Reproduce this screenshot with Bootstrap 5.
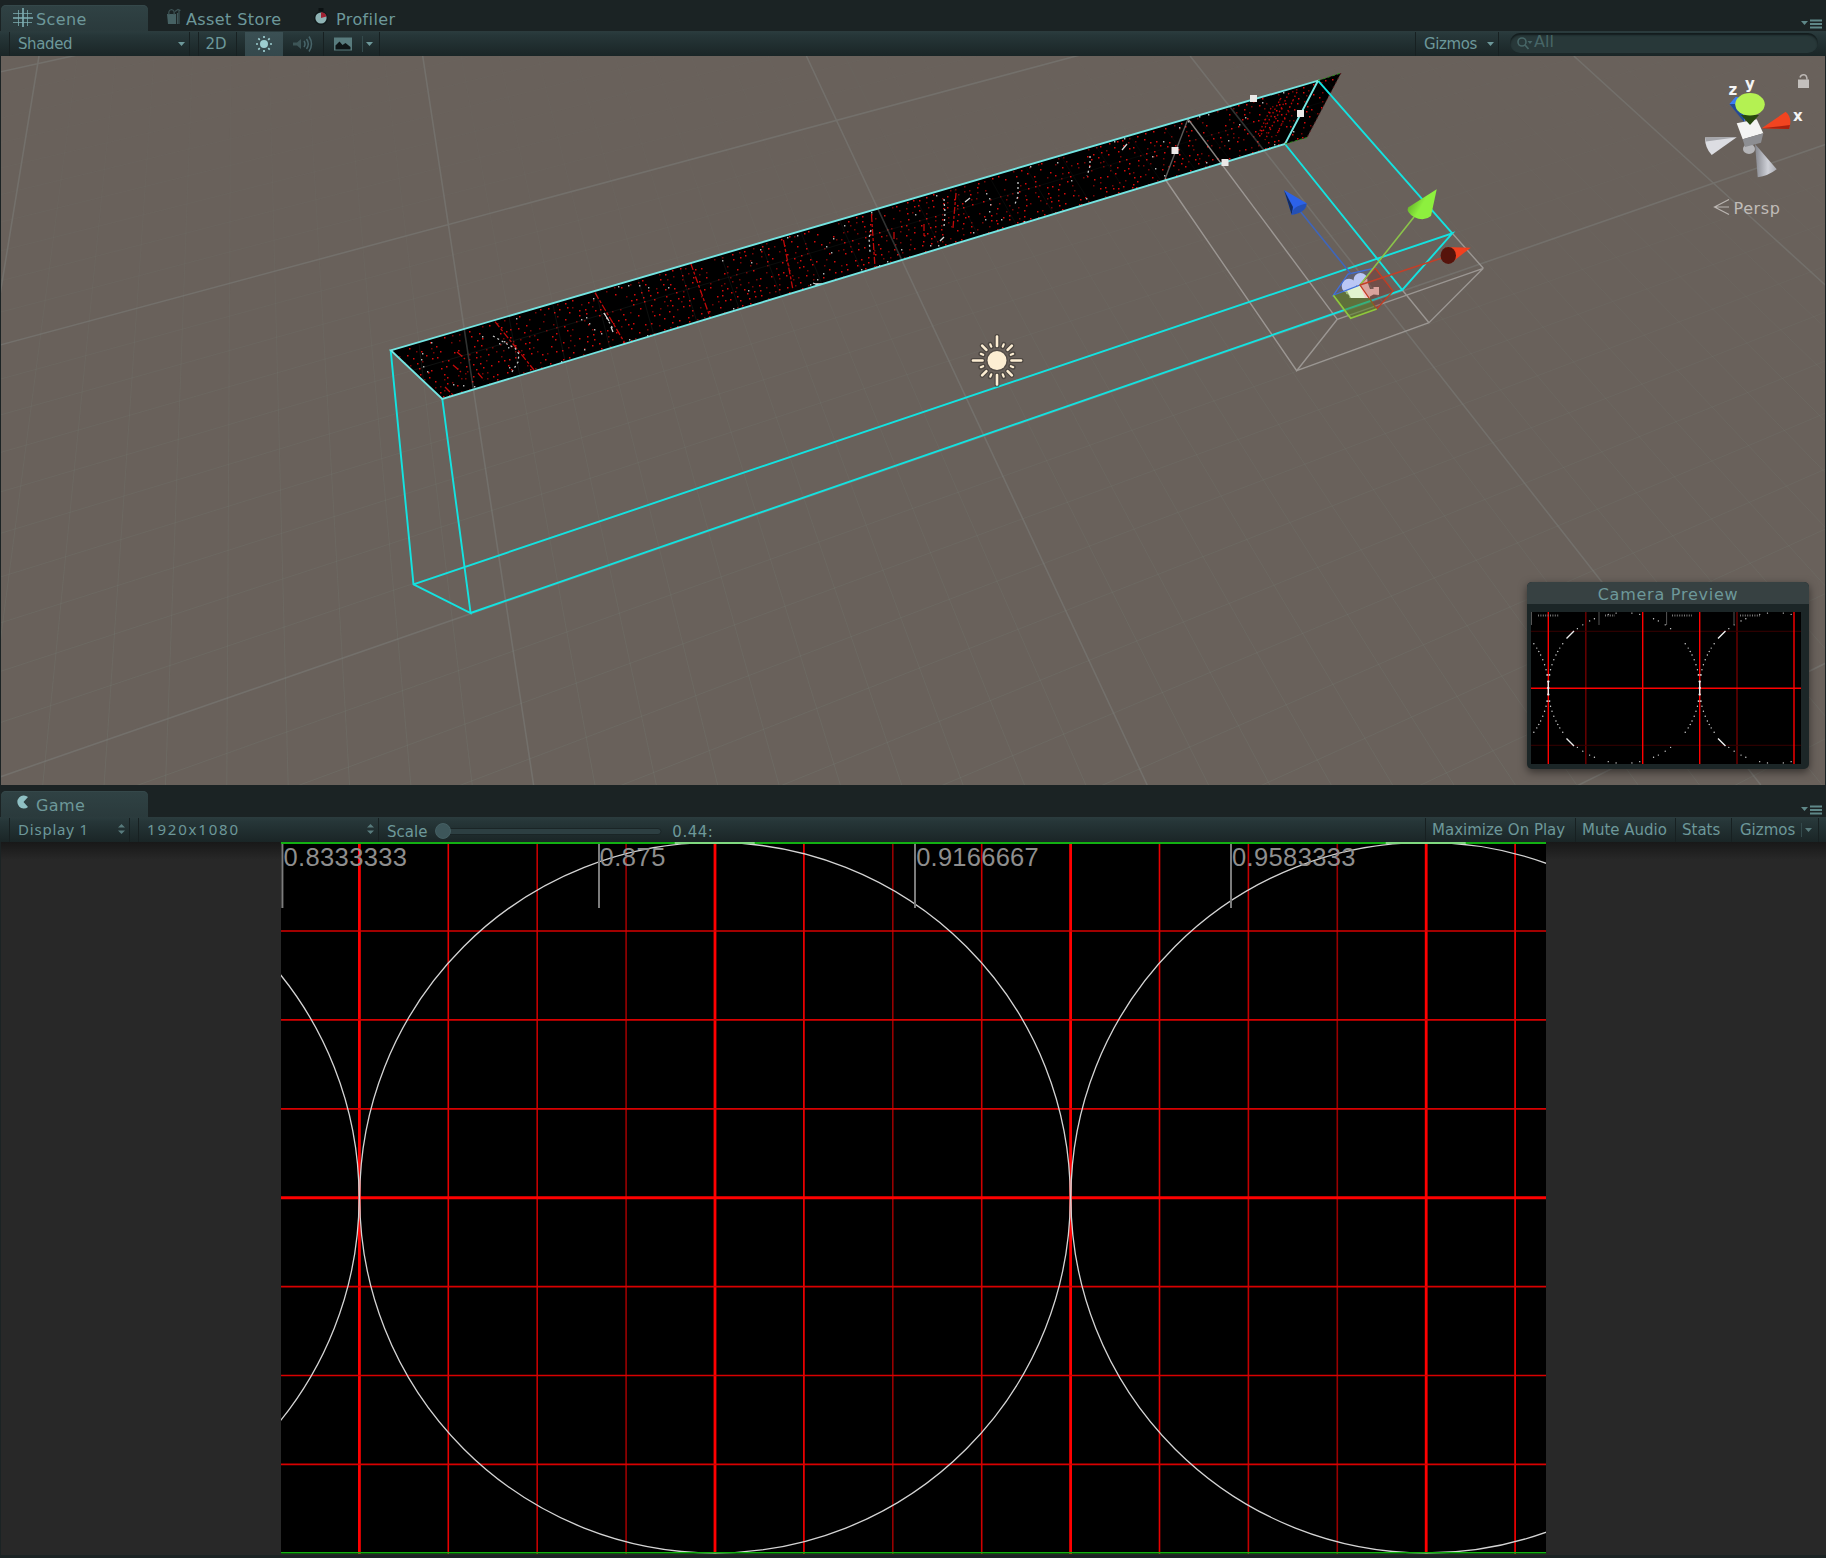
<!DOCTYPE html>
<html lang="en">
<head>
<meta charset="utf-8">
<title>Scene and Game</title>
<link href="https://cdn.jsdelivr.net/npm/bootstrap@5.3.0/dist/css/bootstrap.min.css" rel="stylesheet">
<script src="https://cdn.jsdelivr.net/npm/bootstrap@5.3.0/dist/js/bootstrap.bundle.min.js"></script>
<style>
body{width:1826px;height:1558px;margin:0;background:#1b2324;color:#6d989a;font:15px/18px "DejaVu Sans",sans-serif;overflow:hidden}
svg{display:block;flex:none}
.strip{height:31px;padding:5px 6px 0 1px}
.strip-game{height:32px;padding-top:6px}
.ed-tab{width:147px;height:26px;font-size:16px;letter-spacing:.4px;padding:6px 0 0 12px;color:#6d989a}
.ed-tab svg{margin-top:-3px}
.ed-tab.on{background:linear-gradient(#304244,#2a3a3c);border-radius:5px 5px 0 0;box-shadow:inset 0 1px #35484a}
.tbar{height:25px;background:linear-gradient(#2a3b3d,#263638 15%,#1a2526);border-top:1px solid #2b3b3d;padding-left:9px}
.tbar>div{height:24px}
.sep{border-left:1px solid #172021;border-right:1px solid #172021}
.sepr{border-right:1px solid #172021}
.w-shaded{width:181px;padding:0 4px 0 8px;margin-right:8px;letter-spacing:-.4px}
.w-2d{width:39px;margin-right:8px;padding-right:3px}
.lit{width:38px;background:linear-gradient(#3b5054,#34484c)}
.w-audio{width:41px}
.w-img{width:56px}
.w-giz{width:84px;padding:0 4px 0 8px;margin-right:11px;letter-spacing:-.4px}
.find{width:308px;height:20px!important;margin:1px 8px 0 0;border-radius:10px;background:#283839;box-shadow:inset 0 2px 2px #121b1c;color:#476667;padding-left:7px;font-size:16px;line-height:17px}
.view{height:729px;margin:0 1px;background:#69615b}
.w-disp{width:121px;padding:0 3px 0 8px;margin-right:8px}
.w-res{width:241px;padding:0 3px 0 8px;margin-right:8px}
.noto{font-family:"Noto Sans",sans-serif;letter-spacing:.8px;line-height:16px;padding-bottom:2px}
.noto.wide{letter-spacing:1.8px}
.track{width:227px;height:16px;margin:1px 10px 0 8px}
.num{letter-spacing:.5px}
.gbtn{padding-left:6px}
.game{height:713px;background:linear-gradient(#181818,#282828 18px);margin-left:1px}
.cam{left:1527px;top:582px;width:282px;height:187px;border-radius:5px;background:#1c2627;box-shadow:0 3px 9px rgba(0,0,0,.5);overflow:hidden}
.cam-head{height:22px;background:#374142;font-size:16px;letter-spacing:.75px;line-height:26px}
.cam-img{margin:8px 0 0 4px}
</style>
</head>
<body class="d-flex flex-column position-relative">
<div class="strip d-flex justify-content-between">
  <div class="d-flex">
    <div class="ed-tab on d-flex"><svg width="20" height="20" viewBox="0 0 20 20" style="margin-right:3px" stroke="#7fb0b4" fill="none"><path d="M5.500 2v16M14.500 2v16M0 5.500h19M0 14.500h19" opacity=".75"/><path d="M10 0v19M0 10h20" stroke-width="1.600"/></svg>Scene</div>
    <div class="ed-tab d-flex" style="width:160px;padding-left:18px"><svg class="me-1" width="16" height="18" viewBox="0 0 16 18"><path d="M1 6h9v10H2z" fill="#466163"/><path d="M3 7q-1-5 2.500-5.500Q9 2 8 7M9 3.500l3-2 2.500 1M13 2v14M11.500 5v11" stroke="#3f5557" fill="none" stroke-width="1.200"/></svg>Asset Store</div>
    <div class="ed-tab d-flex" style="padding-left:5px"><svg width="22" height="18" viewBox="0 0 22 18" style="margin-right:1px"><circle cx="8" cy="10" r="7" fill="#11191a"/><circle cx="8" cy="10" r="5.600" fill="#8fb3b4"/><path d="M8 10V4.300a5.600 5.600 0 0 1 5.400 4.200z" fill="#a02233"/><path d="M5.500 1.500h5" stroke="#0c1213" stroke-width="3"/></svg>Profiler</div>
  </div>
  <svg width="24" height="12" viewBox="0 0 24 12" style="margin:13px -3px 0 0"><path d="M2 3h7l-3.500 4z" fill="#5f8788"/><path d="M11 2.500h12M11 6h12M11 9.500h12" stroke="#5f8788" stroke-width="1.800"/></svg>
</div>
<div class="tbar d-flex">
  <div class="sep w-shaded d-flex align-items-center justify-content-between">Shaded<svg width="7" height="5"><path d="M0 0h7l-3.500 4z" fill="#6d989a"/></svg></div>
  <div class="sep w-2d d-flex align-items-center justify-content-center">2D</div>
  <div class="lit d-flex align-items-center justify-content-center"><svg width="18" height="18" viewBox="-9 -9 18 18"><circle r="4" fill="#9ccdd0"/><path d="M0-8v2M0 6v2M-8 0h2M6 0h2M-5.700-5.700l1.500 1.500M4.200 4.200l1.500 1.500M-5.700 5.700l1.500-1.500M4.200-4.200l1.500-1.500" stroke="#9ccdd0" stroke-width="1.700"/></svg></div>
  <div class="w-audio sepr d-flex align-items-center justify-content-center"><svg width="22" height="18" viewBox="0 0 22 18" fill="none" stroke="#48656a" stroke-width="1.500"><path d="M1 7.500h4l4-3.500v10l-4-3.500H1z" fill="#3d5557" stroke="none"/><path d="M12 6q2 3 0 6M14.500 4q3.500 5 0 10M17 1.500q5 7.500 0 15"/></svg></div>
  <div class="w-img sepr d-flex align-items-center"><svg width="55" height="20" viewBox="0 0 55 20"><path d="M10 3.500h18v13H10z" fill="#587b7d"/><path d="M11.500 15.500v-4l4-4 3 3.500 3-2 5 4v2.500z" fill="#0e1516"/><path d="M38.500 2v16" stroke="#344a4c"/><path d="M42 8h7l-3.500 4z" fill="#6d989a"/></svg></div>
  <div class="ms-auto sep w-giz d-flex align-items-center justify-content-between">Gizmos<svg width="7" height="5"><path d="M0 0h7l-3.500 4z" fill="#6d989a"/></svg></div>
  <div class="find d-flex"><svg width="17" height="20" viewBox="0 0 17 20" fill="none" stroke="#476667" stroke-width="1.600"><circle cx="5" cy="9" r="4"/><path d="M8 12l3.500 4"/><path d="M10.500 8h5l-2.500 3z" fill="#476667" stroke="none"/></svg>All</div>
</div>
<div class="view">
<svg id="scene" width="1824" height="729" viewBox="1 56 1824 729" fill="none">
  <defs>
    <linearGradient id="fade" x1="0" y1="0" x2="0" y2="1"><stop offset=".1" stop-color="#333"/><stop offset=".45" stop-color="#aaa"/><stop offset="1" stop-color="#fff"/></linearGradient>
    <mask id="low" maskUnits="userSpaceOnUse" x="0" y="56" width="1826" height="729"><path d="M0 56h1826v729H0z" fill="url(#fade)"/></mask>
    <linearGradient id="gc" x1="0" y1="0" x2="1" y2=".6"><stop offset="0" stop-color="#4c8b1d"/><stop offset=".6" stop-color="#8df03e"/></linearGradient>
    <linearGradient id="wc" x1="0" y1="0" x2="1" y2="0"><stop offset="0" stop-color="#85878e"/><stop offset=".6" stop-color="#cfd1d8"/><stop offset="1" stop-color="#a9abb2"/></linearGradient>
    <clipPath id="band"><path d="M390.700 350.300L1341 73 1307 137.500 442.300 399z"/></clipPath>
  </defs>
  <path d="M390.700 350.300L1318 80.700 1341 73 1307 137.500 1285 144 442.300 399z" fill="#000"/>
  <g id="dots" clip-path="url(#band)"></g>
  <g id="minor" stroke="#7c8a84" stroke-opacity=".2" mask="url(#low)"></g>
  <g id="major" stroke="#858a89" stroke-opacity=".36" stroke-width="1.600"></g>
  <g stroke="#a8a4a0" stroke-opacity=".8" stroke-width="1.400">
    <path d="M1188 119L1337.300 319.300M1165 179L1296.700 370.700 1337.300 319.300M1296.700 370.700L1429 322.700 1483.300 268.300 1337.300 319.300M1402.300 290L1429 322.700M1452.300 233.300L1483.300 268.300"/>
    <path d="M1165 179L1188 119" stroke-opacity=".55"/>
  </g>
  <g stroke="#13e3e1" stroke-width="1.900">
    <path d="M390.700 350.300L413.500 584.300 470.600 613 442.300 399M413.500 584.300L1452.300 233.300 1402.300 290 470.600 613M1318 80.700L1452.300 233.300M1285 144L1402.300 290"/>
    <path d="M390.700 350.300L1318 80.700 1285 144 442.300 399z" stroke="#74e5e2"/>
  </g>
  <path d="M1318 80.500L1341 73M1285 144L1307 137.500" stroke="#2c8a1c" stroke-dasharray="3 2"/>
  <path d="M1341 73L1307 137.500" stroke="#5e2020" stroke-dasharray="2 3"/>
  <g fill="#ebe9e8"><path d="M1250 95h7v7h-7zM1297 110h7v7h-7zM1171.500 147h7v7h-7zM1221.500 159h7v7h-7z"/></g>
  <!-- directional light -->
  <g transform="translate(997 360.500)"><g stroke="#2f2b28" stroke-opacity=".5" stroke-linecap="round" stroke-width="5" id="halo"></g><circle r="10.800" fill="#403a35" opacity=".5"/><circle r="9.500" fill="#fdeed3"/><g id="rays" stroke="#fdeed3" stroke-linecap="round"></g></g>
  <!-- camera icon and transform handles -->
  <g><circle cx="1349" cy="286" r="7.300" fill="#d3daf7"/><circle cx="1360.500" cy="280" r="7" fill="#d3daf7"/><path d="M1346 291l14-6 8 5-1 8h-17.500q0-4-3.500-4z" fill="#e2f3cf"/><path d="M1360 285l6-7 4 11 3.500 0 0-2h5.500v8l-5.500-.5-3.500 2v1.500h-5z" fill="#f2d0cb"/></g>
  <path d="M1333.300 295.300L1348 274 1375 268 1360 285z" fill="#2f60e8" fill-opacity=".15" stroke="#3f6fdc" stroke-width="1.300"/>
  <path d="M1375 268L1393 291 1376.700 309 1360 285z" fill="#8a1c12" fill-opacity=".25" stroke="#c43c22" stroke-width="1.300"/>
  <path d="M1333.300 295.300L1347 291l4 7h19l-1-2 7.700 13-26 9.300z" fill="#56801c" fill-opacity=".5"/>
  <path d="M1333.300 295.300L1350.700 318.300 1376.700 309" stroke="#8fc83c" stroke-width="1.700"/>
  <path d="M1300 211L1351 274" stroke="#3e66bc" stroke-width="1.600"/><path d="M1414 217L1360 285" stroke="#8bc44a" stroke-width="1.600"/><path d="M1448 256L1360 285" stroke="#c43f28" stroke-width="1.600"/>
  <path d="M1284 190L1306.700 203.300Q1305 213 1291.700 214.700z" fill="#2c62e8"/><path d="M1284 190L1293 207 1291.700 214.700z" fill="#152c5e"/><path d="M1306.700 203.500Q1306 213 1291.700 214.700 1292 206 1306.700 203.500" fill="#2450b5"/>
  <path d="M1436.700 189.300L1431 216Q1424 222 1414 217 1406 212 1408 207.500z" fill="url(#gc)"/>
  <path d="M1446 247l24.700.7L1451 263z" fill="#f2401f"/><ellipse cx="1448.300" cy="255.500" rx="7.700" ry="8.500" fill="#56130b"/>
  <!-- orientation gizmo -->
  <path d="M1729.500 104L1735.700 96.700 1742 98 1745 122z" fill="#3a7df2"/><path d="M1729.500 104l14.500 18v-6l-8-12z" fill="#244a94"/>
  <ellipse cx="1749" cy="149" rx="6" ry="5" fill="#b5b5b8"/>
  <path d="M1736.700 123.300L1756.700 119.300 1763.300 133.300 1742.700 139.300z" fill="#f4f4f3"/><path d="M1742.700 139.300L1763.300 133.300 1761 142.700 1745 147z" fill="#8d8e92"/>
  <path d="M1741 115h18l-9 10z" fill="#28480f"/><ellipse cx="1750" cy="104.300" rx="14.800" ry="11.200" fill="#b4f152"/>
  <path d="M1761.700 128.300L1785.700 111.700Q1793 118 1789 129z" fill="#f24420"/><path d="M1761.700 128.300L1790 125 1789 129z" fill="#a8210f"/>
  <path d="M1736.700 137.300L1705 137.500Q1705 148 1711.700 155z" fill="#dcdde2"/><path d="M1736.700 137.300L1705 137.500l1 4z" fill="#a5a6ab"/>
  <path d="M1755 144L1776.700 169.300Q1768 176 1757.700 177.300z" fill="url(#wc)"/>
  <path d="M1798 79.500h11v8.500h-11z" fill="#c4c0bd"/><path d="M1800 77.500q1-3 4-2.800 3 .3 3 5" stroke="#bdb8b5" stroke-width="1.500"/>
  <g fill="#f4f4f4" font-family="DejaVu Sans" font-weight="bold" font-size="15"><text x="1728.500" y="95">z</text><text x="1745" y="89">y</text><text x="1793" y="120.500">x</text></g>
  <path d="M1729 199.500L1714.500 207 1729 214.500M1714.500 207H1729" stroke="#bab5b1" stroke-width="1.200"/>
  <text x="1733.500" y="213.500" fill="#c0bcb8" font-family="DejaVu Sans" font-size="16" letter-spacing=".6">Persp</text>
</svg>
</div>
<div class="strip strip-game d-flex justify-content-between">
  <div class="ed-tab on d-flex" style="padding-left:15px"><svg width="20" height="18" viewBox="0 0 20 18"><path d="M12 3A6.500 6.500 0 1 0 12 13L7.500 8z" fill="#8fc0c4"/></svg>Game</div>
  <svg width="24" height="12" viewBox="0 0 24 12" style="margin:13px -3px 0 0"><path d="M2 3h7l-3.500 4z" fill="#5f8788"/><path d="M11 2.500h12M11 6h12M11 9.500h12" stroke="#5f8788" stroke-width="1.800"/></svg>
</div>
<div class="tbar d-flex">
  <div class="sep w-disp noto d-flex align-items-center justify-content-between">Display 1<svg width="9" height="12"><path d="M1 4.500h7L4.500 1zM1 7.500h7L4.500 11z" fill="#587b7d"/></svg></div>
  <div class="sep w-res noto wide d-flex align-items-center justify-content-between">1920x1080<svg width="9" height="12"><path d="M1 4.500h7L4.500 1zM1 7.500h7L4.500 11z" fill="#587b7d"/></svg></div>
  <div class="d-flex align-items-center"><span class="pt-1">Scale</span><svg class="track" viewBox="0 0 227 16"><rect x="8" y="5.500" width="218" height="6" rx="3" fill="#2d3f42" stroke="#1a2526"/><ellipse cx="8" cy="8" rx="7.500" ry="7.500" fill="#3d565a" stroke="#4a666a" stroke-width=".8"/></svg><span class="pt-1 num">0.44:</span></div>
  <div class="ms-auto sep gbtn d-flex align-items-center" style="width:151px">Maximize On Play</div>
  <div class="sepr gbtn d-flex align-items-center" style="width:100px">Mute Audio</div>
  <div class="sepr gbtn d-flex align-items-center" style="width:56px">Stats</div>
  <div class="sepr d-flex align-items-center" style="width:87px;margin-right:7px;padding-left:8px">Gizmos<svg width="18" height="20" viewBox="0 0 18 20" class="ms-auto"><path d="M1.500 3v14" stroke="#344a4c"/><path d="M5 8h7l-3.500 4z" fill="#587b7d"/></svg></div>
</div>
<div class="game d-flex justify-content-center">
  <svg id="game" width="1265" height="712" viewBox="281.300 842 1265 712" fill="none">
    <path d="M281 842h1266v712H281z" fill="#000"/>
    <g id="reds" stroke="#f00"></g>
    <g stroke="#d4d4d4" stroke-width="1.300"><circle cx="4.100" cy="1197.700" r="355.300"/><circle cx="715.300" cy="1197.700" r="355.300"/><circle cx="1426.500" cy="1197.700" r="355.300"/></g>
    <path d="M282.700 843v65M599.300 843v65M915.300 843v65M1231.300 843v65" stroke="#7c7c7c" stroke-width="2"/>
    <g fill="#8e8e8e" font-family="Liberation Sans" font-size="25.500"><text x="283.800" y="866" textLength="123.500">0.8333333</text><text x="599.800" y="866" textLength="66">0.875</text><text x="916.500" y="866" textLength="122.500">0.9166667</text><text x="1232.300" y="866" textLength="123.500">0.9583333</text></g>
    <path d="M281 843h1266" stroke="#12b012" stroke-width="2"/><path d="M281 1552.700h1266" stroke="#12b012" stroke-width="1.500"/>
    <path d="M675 843h80M1386 843h80" stroke="#a5e8a5" stroke-width="1.300"/>
  </svg>
</div>
<!-- floating camera preview -->
<div class="cam position-absolute">
  <div class="cam-head text-center">Camera Preview</div>
  <svg class="cam-img" width="270" height="152" viewBox="1531 612 270 152" fill="none">
    <path d="M1531 612h270v152h-270z" fill="#000"/>
    <path d="M1585.800 612v152M1737 612v152" stroke="#680000" stroke-width="1.500"/><path d="M1531 631.300h270M1531 745.300h270" stroke="#380000"/>
    <path d="M1548.300 612v152M1642.700 612v152M1699.700 612v152M1794 612v152M1531 688.300h270" stroke="#f00" stroke-width="1.400"/>
    <g id="mini" fill="#d8d8d8"></g>
    <path d="M1531.500 612v13M1599 612v13M1666.600 612v13M1734 612v13" stroke="#555"/>
    <path d="M1538 615.500h21M1605 615.500h10M1672 615.500h20M1740 615.500h20" stroke="#777" stroke-width="2" stroke-dasharray="1 1.400"/>
    <path d="M1548.300 681v14M1699.700 681v14M1566.500 638.500l7.500-7.500M1718 638.500l7.500-7.500M1566.500 738.500l7.500 7.500M1718 738.500l7.500 7.500" stroke="#eee" stroke-width="1.400"/>
  </svg>
</div>
<script>
const el = id => document.getElementById(id);
const path = (d, extra) => `<path d="${d}" ${extra || ''}/>`;

// ground grid: two line families meeting in perspective
let minor = '', major = '';
const vline = k => `M${39 + 383.7 * k} 56L${-80 + 613.6 * k} 785`;
const hline = t => `M0 ${(72 + 209.5 * t) / (1 - .184 * t)}L1826 ${(-330 + 211 * t) / (1 - .181 * t)}`;
for (let i = -12; i < 48; i++) { if (i % 10) minor += vline(i / 10); else major += vline(i / 10); }
for (let i = 0; i < 40; i++) { if (i % 10) minor += hline(i / 10); else major += hline(i / 10); }
el('minor').innerHTML = path(minor);
el('major').innerHTML = path(major);

// light rays
let rays = '';
for (let i = 0; i < 16; i++) {
  const a = i * Math.PI / 8, r0 = i % 4 === 0 ? 14.5 : 15, r1 = i % 4 === 0 ? 24 : i % 2 === 0 ? 21 : 17.5;
  rays += path(`M${r0 * Math.cos(a)} ${r0 * Math.sin(a)}L${r1 * Math.cos(a)} ${r1 * Math.sin(a)}`, `stroke-width="${i % 2 ? 2.2 : 2.6}"`);
}
el('rays').innerHTML = rays;
el('halo').innerHTML = rays.replace(/stroke-width="[\d.]+"/g, '');

// speckled texture of the timeline strip
let seed = 7;
const rnd = () => (seed = (seed * 16807) % 2147483647) / 2147483647;
const at = (u, v) => {
  const tx = 390.7 + u * 950.3, ty = 350.3 - u * 277.3, bx = 442.3 + u * 864.7, by = 399 - u * 261.5;
  return [tx + (bx - tx) * v, ty + (by - ty) * v];
};
let bright = '', dim = '', white = '';
for (let i = 0; i < 130; i++) for (let j = 0; j < 11; j++) {
  if (rnd() < .3) continue;
  const [x, y] = at((i + rnd() * .6) / 130, (j + .4 + rnd() * .3) / 11);
  const s = `M${Math.round(x)} ${Math.round(y)}h1.5v1.5h-1.5z`;
  if (rnd() < .6) bright += s; else dim += s;
}
for (let c = 0; c < 11; c++) {
  for (let a = 0; a < 26; a++) {
    if (rnd() < .72) continue;
    const th = a / 26 * 2 * Math.PI, [x, y] = at(.055 + c * .089 + Math.cos(th) * .043, .5 + Math.sin(th) * .47);
    white += `M${Math.round(x)} ${Math.round(y)}h1.4v1.4h-1.4z`;
  }
}
const seg = 'M495 321.700L534 370M595 292.700L625 343.300M690.700 263.300L710 317M783.500 240L793 290M871.500 215L875 267M956 193L953 228M445 387l8 8M457 352l8 7M453 365l8 7M478 373l6 7M924 224v12M894 232v8';
const rows = 'M1289 93L1265 140M1297 92L1276 136M1281 98L1261 135M1271 108L1258 135';
el('dots').innerHTML = path(dim, 'fill="#780606"') + path(bright, 'fill="#d80a0a"') +
  path(seg, 'stroke="#c40808" stroke-width="1.300" stroke-dasharray="7 2 3 2"') +
  path(rows, 'stroke="#c40808" stroke-width="1.300" stroke-dasharray="1.500 2.500"') + path(white, 'fill="#b4b4b4"') +
  path('M604 313l9 16M493 336l14 8 8 4 4 6-1 8-6 10M871 230l-2 8 1 14M944 199l1 14-1 14M1018 182v14l-3 8M1090 156v10l-3 10', 'stroke="#ccc" stroke-width="1.300" stroke-dasharray="2 3"') +
  path('M604 313l5 8M611 327l2 5M965 202l5-4M940 241l4-4M1122 150l5-6M815 284h7M813 283l5 2', 'stroke="#d5d5d5" stroke-width="1.300"');

// game view lines
let reds = '';
const vc = ['#f00', '#e80000', '#c40000', '#9a0000', '#f00', '#f00', '#960000', '#d00000'];
for (let k = 0; k < 14; k++) {
  const x = 359.7 + 88.9 * k, big = k % 4 === 0;
  reds += path(`M${x} 843v711`, `stroke="${vc[k % 8]}" stroke-width="${big ? 2.8 : 1.6}"`);
}
for (let k = -3; k < 4; k++) reds += path(`M281 ${1197.7 + 88.9 * k}h1266`, `stroke="${k ? '#d80000' : '#f00'}" stroke-width="${k ? 1.7 : 2.9}"`);
el('reds').innerHTML = reds;

// preview circles, sampled at coarse steps
const marks = [0, 5, 10, 14, 18, 22, 26, 29, 32, 36, 52, 57, 63, 67, 78, 84];
let mini = '';
for (const cx of [1472.6, 1624, 1775.4]) for (const m of marks) for (const q of [[1, 1], [1, -1], [-1, 1], [-1, -1]]) {
  const a = m * Math.PI / 180;
  mini += `<circle cx="${cx + q[0] * 75.7 * Math.cos(a)}" cy="${688 + q[1] * 75.3 * Math.sin(a)}" r="${m % 5 ? .7 : .95}"/>`;
}
el('mini').innerHTML = mini;
</script>
</body>
</html>
